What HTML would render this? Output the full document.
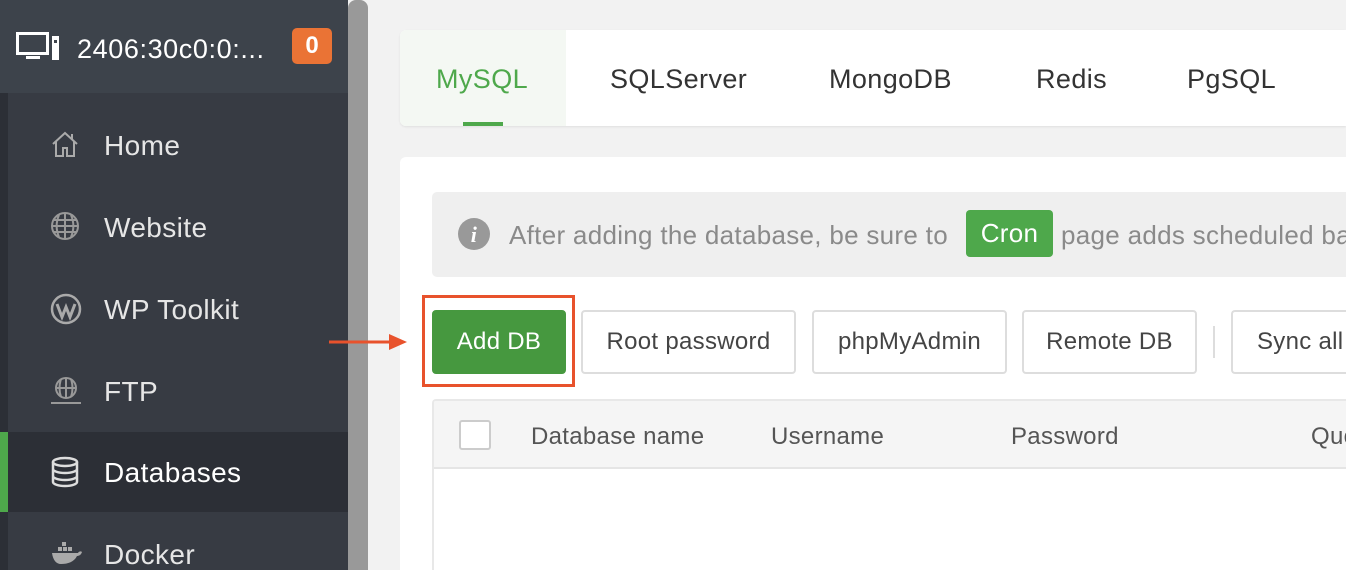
<!DOCTYPE html>
<html><head><meta charset="utf-8"><style>
*{box-sizing:border-box;margin:0;padding:0}
html,body{width:1346px;height:570px;overflow:hidden}
body{background:#f2f2f2;font-family:"Liberation Sans",sans-serif;position:relative}
.side{position:absolute;left:0;top:0;width:348px;height:570px;background:#373b43}
.hdr{position:absolute;left:0;top:0;width:348px;height:93px;background:#3d434b}
.hdr .t{position:absolute;left:77px;top:34px;color:#fff;font-size:27px;letter-spacing:.6px}
.badge{position:absolute;left:292px;top:28px;width:40px;height:36px;background:#ea7335;border-radius:5px;color:#fff;font-weight:bold;font-size:24px;text-align:center;line-height:36px}
.strip{position:absolute;left:0;top:93px;width:8px;height:477px;background:#2c2f36}
.nav{position:absolute;left:8px;width:340px;height:80px;color:#e6e6e6;font-size:28px;letter-spacing:.4px}
.nav span{position:absolute;left:96px;top:25px}
.nav svg{position:absolute;left:42px;top:24px}
.act{background:#2c2f36;color:#fff}
.grn{position:absolute;left:0;top:432px;width:8px;height:80px;background:#4ea84b}
.scroll{position:absolute;left:348px;top:0;width:20px;height:570px;background:#999;border-radius:8px 8px 0 0}
.tabs{position:absolute;left:400px;top:30px;width:946px;height:96px;background:#fff;border-radius:6px 0 0 6px;box-shadow:0 1px 2px rgba(0,0,0,.08)}
.tab{position:absolute;top:34px;font-size:27px;color:#333;letter-spacing:.4px}
.card{position:absolute;left:400px;top:157px;width:946px;height:413px;background:#fff;border-radius:6px 0 0 0}
.note{position:absolute;left:432px;top:192px;width:914px;height:85px;background:#efefef;border-radius:5px 0 0 5px;font-size:26px;color:#8a8a8a;white-space:nowrap;letter-spacing:.3px;overflow:hidden}
.btn{position:absolute;top:310px;height:64px;border:2px solid #ddd;border-radius:4px;background:#fff;font-size:24px;color:#444;text-align:center;line-height:60px;letter-spacing:.3px;white-space:nowrap;overflow:hidden}
.tbl{position:absolute;left:432px;top:399px;width:914px;height:171px;border:2px solid #e8e8e8;border-right:none;border-bottom:none;border-radius:4px 0 0 0;background:#fff;overflow:hidden}
.th{position:absolute;left:0;top:0;width:100%;height:68px;background:#f5f5f5;border-bottom:2px solid #e5e5e5}
.th span{position:absolute;top:22px;font-size:24px;color:#555;letter-spacing:.3px;white-space:nowrap}
</style></head><body>
<div class="side"></div>
<div class="hdr">
<svg style="position:absolute;left:16px;top:32px" width="46" height="30" viewBox="0 0 46 30"><rect x="1.5" y="1.5" width="30" height="20" fill="none" stroke="#fff" stroke-width="3"/><rect x="10" y="24" width="14" height="3" fill="#fff"/><rect x="36" y="4" width="7" height="24" fill="#fff"/><rect x="38" y="8" width="3" height="3" fill="#3d434b"/></svg>
<div class="t">2406:30c0:0:...</div><div class="badge">0</div></div>
<div class="strip"></div>
<div class="nav" style="top:105px"><svg width="30" height="30" viewBox="0 0 30 30" fill="none" stroke="#aaa" stroke-width="2"><path d="M3 15L15 4l12 11M6 12v15h7v-8h4v8h7V12M22 5v5"/></svg><span>Home</span></div>
<div class="nav" style="top:187px"><svg width="30" height="30" viewBox="0 0 30 30" fill="none" stroke="#999" stroke-width="2"><circle cx="15" cy="15" r="13"/><path d="M2 15h26M4 9h22M4 21h22M15 2v26M9 4c-3 7-3 15 0 22M21 4c3 7 3 15 0 22"/></svg><span>Website</span></div>
<div class="nav" style="top:269px"><svg width="32" height="32" viewBox="0 0 32 32" fill="none" stroke="#aaa" stroke-width="2.5"><circle cx="16" cy="16" r="14"/><path d="M7 11l5 13 4-10 4 10 5-13" stroke-width="3"/></svg><span>WP Toolkit</span></div>
<div class="nav" style="top:351px"><svg width="32" height="32" viewBox="0 0 32 32" fill="none" stroke="#999" stroke-width="2"><circle cx="16" cy="13" r="10"/><path d="M6 13h20M16 3v20M11 4c-2 6-2 12 0 18M21 4c2 6 2 12 0 18M1 28h30"/></svg><span>FTP</span></div>
<div class="nav act" style="top:432px"><svg width="30" height="32" viewBox="0 0 30 32" fill="none" stroke="#ddd" stroke-width="2.5"><ellipse cx="15" cy="6" rx="12" ry="4"/><path d="M3 6v20c0 2 5 4 12 4s12-2 12-4V6M3 13c0 2 5 4 12 4s12-2 12-4M3 20c0 2 5 4 12 4s12-2 12-4"/></svg><span>Databases</span></div>
<div class="grn"></div>
<div class="nav" style="top:514px;height:56px"><svg width="32" height="30" viewBox="0 0 32 30" fill="#aaa"><rect x="12" y="4" width="4" height="4"/><rect x="8" y="9" width="4" height="4"/><rect x="13" y="9" width="4" height="4"/><rect x="18" y="9" width="4" height="4"/><path d="M2 15h26c1-2 3-2 4-1-1 3-3 4-5 4-3 6-9 8-16 8-5 0-8-4-9-11z"/></svg><span>Docker</span></div>
<div class="scroll"></div>
<div class="tabs">
<div style="position:absolute;left:0;top:0;width:166px;height:96px;background:#f4f8f3;border-radius:6px 0 0 6px"></div>
<div class="tab" style="left:36px;color:#4ea84b">MySQL</div>
<div style="position:absolute;left:63px;top:92px;width:40px;height:4px;background:#4ea84b"></div>
<div class="tab" style="left:210px">SQLServer</div>
<div class="tab" style="left:429px">MongoDB</div>
<div class="tab" style="left:636px">Redis</div>
<div class="tab" style="left:787px">PgSQL</div>
</div>
<div class="card"></div>
<div class="note">
<svg style="position:absolute;left:26px;top:26px" width="32" height="32"><circle cx="16" cy="16" r="16" fill="#999"/><text x="16" y="24" font-family="Liberation Serif" font-style="italic" font-weight="bold" font-size="22" fill="#fff" text-anchor="middle">i</text></svg>
<span style="position:absolute;left:77px;top:28px">After adding the database, be sure to</span>
<span style="position:absolute;left:534px;top:18px;width:87px;height:47px;background:#4ea84b;color:#fff;border-radius:4px;text-align:center;line-height:47px">Cron</span>
<span style="position:absolute;left:629px;top:28px">page adds scheduled backups</span>
</div>
<div style="position:absolute;left:422px;top:295px;width:153px;height:92px;border:3px solid #e8522c"></div>
<svg style="position:absolute;left:329px;top:331px" width="80" height="22"><path d="M0 11h62" stroke="#e8522c" stroke-width="3"/><path d="M60 3l18 8-18 8z" fill="#e8522c"/></svg>
<div class="btn" style="left:432px;width:134px;background:#46983f;border-color:#46983f;color:#fff">Add DB</div>
<div class="btn" style="left:581px;width:215px">Root password</div>
<div class="btn" style="left:812px;width:195px">phpMyAdmin</div>
<div class="btn" style="left:1022px;width:175px">Remote DB</div>
<div style="position:absolute;left:1213px;top:326px;width:2px;height:32px;background:#ddd"></div>
<div class="btn" style="left:1231px;width:115px;text-align:left;padding-left:24px;border-right:none;border-radius:4px 0 0 4px">Sync all</div>
<div class="tbl"><div class="th">
<div style="position:absolute;left:25px;top:19px;width:32px;height:30px;border:2px solid #ccc;border-radius:3px;background:#fff"></div>
<span style="left:97px">Database name</span><span style="left:337px">Username</span><span style="left:577px">Password</span><span style="left:877px">Quota</span>
</div></div>
</body></html>
